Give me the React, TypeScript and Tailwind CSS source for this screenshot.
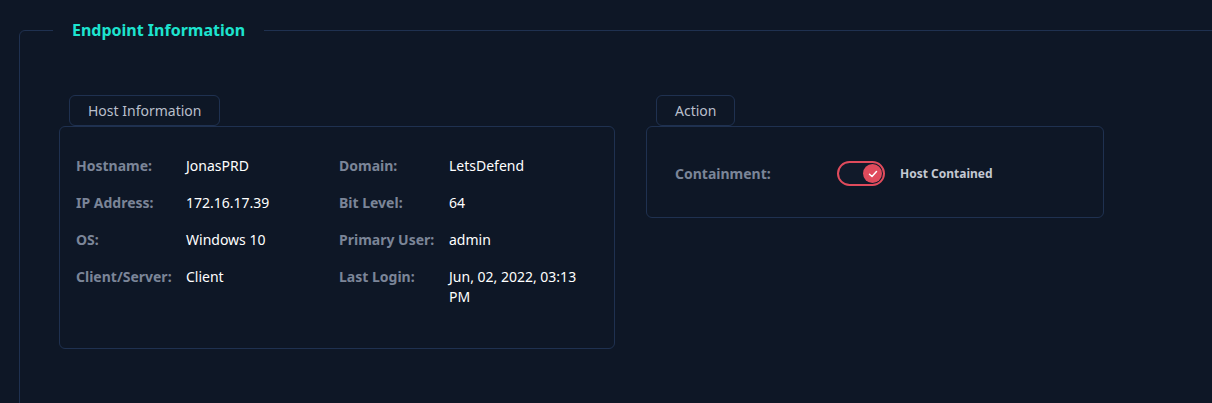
import React from 'react';

const hostRows: [string, string, string, string][] = [
  ['Hostname:', 'JonasPRD', 'Domain:', 'LetsDefend'],
  ['IP Address:', '172.16.17.39', 'Bit Level:', '64'],
  ['OS:', 'Windows 10', 'Primary User:', 'admin'],
  ['Client/Server:', 'Client', 'Last Login:', 'Jun, 02, 2022, 03:13 PM'],
];

function Tab({ label }: { label: string }) {
  return (
    <div className="ml-[10px] self-start rounded-md border border-[#1f3150] px-[18px] h-[31px] flex items-center text-[14px] text-[#b9bfcb]">
      {label}
    </div>
  );
}

function Toggle() {
  return (
    <div className="w-[48px] h-[25px] rounded-full border-2 border-[#e04b5c] bg-[#111a2a] flex items-center justify-end pr-[1px]">
      <div className="w-[19px] h-[19px] rounded-full bg-[#e04b5c] flex items-center justify-center">
        <svg width="10" height="10" viewBox="0 0 10 10" fill="none">
          <path d="M1.5 5.2 L4 7.5 L8.5 2.5" stroke="white" strokeWidth="1.5" strokeLinecap="round" strokeLinejoin="round" />
        </svg>
      </div>
    </div>
  );
}

export default function App() {
  return (
    <div className="w-[1212px] h-[403px] overflow-hidden bg-[#0e1726] pt-[19px] pl-[19px] font-['Noto_Sans',sans-serif]">
      <fieldset className="w-[1240px] min-h-[420px] rounded-tl-md border border-[#1f3150] p-0 m-0">
        <legend className="ml-[33px] px-[19px] text-[16px] leading-[22px] font-bold text-[#1de4cf]">
          Endpoint Information
        </legend>
        <div className="pl-[39px] pt-[54px] flex gap-[31px] items-start">
          <div className="flex flex-col">
            <Tab label="Host Information" />
            <div className="w-[556px] h-[223px] rounded-md border border-[#1f3150] pl-[16px] pr-[14px] pt-[29px]">
              <div className="grid grid-cols-[110px_153px_110px_1fr] gap-y-[17px] text-[14px] leading-[20px]">
                {hostRows.map(([l1, v1, l2, v2]) => (
                  <React.Fragment key={l1}>
                    <div className="font-bold text-[#7b8598]">{l1}</div>
                    <div className="text-white">{v1}</div>
                    <div className="font-bold text-[#7b8598]">{l2}</div>
                    <div className="text-white">{v2}</div>
                  </React.Fragment>
                ))}
              </div>
            </div>
          </div>
          <div className="flex flex-col">
            <Tab label="Action" />
            <div className="w-[458px] h-[92px] rounded-md border border-[#1f3150] pl-[28px] pt-[3px] flex items-center">
              <div className="w-[162px] text-[14px] font-bold text-[#7b8598]">Containment:</div>
              <Toggle />
              <div className="ml-[15px] text-[12px] font-bold text-[#c3c8d2]">Host Contained</div>
            </div>
          </div>
        </div>
      </fieldset>
    </div>
  );
}
